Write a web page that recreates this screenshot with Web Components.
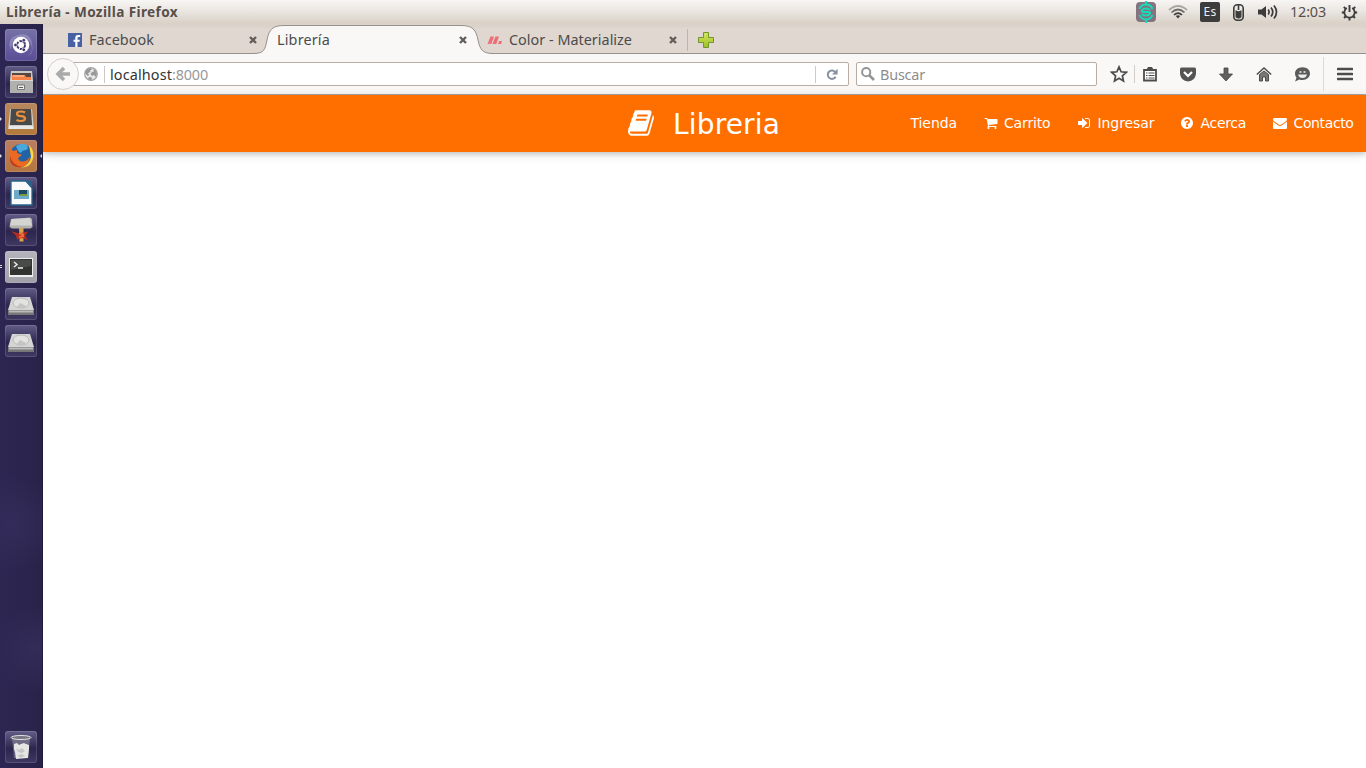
<!DOCTYPE html>
<html lang="es">
<head>
<meta charset="utf-8">
<title>Librería</title>
<style>
html,body{margin:0;height:100%;overflow:hidden;background:#fff}
body{font-family:"Noto Sans","Open Sans",sans-serif;font-size:14.4px;color:#4c4c4c}
</style>
</head>
<body>
<desktop-shell>
  <top-panel slot="panel"></top-panel>
  <app-launcher slot="launcher"></app-launcher>
  <browser-tabs></browser-tabs>
  <browser-toolbar></browser-toolbar>
  <site-navbar></site-navbar>
</desktop-shell>
<script>
const define = (name, html, ready) => {
  const t = document.createElement('template');
  t.innerHTML = html;
  customElements.define(name, class extends HTMLElement {
    constructor() {
      super();
      this.attachShadow({mode: 'open'}).append(t.content.cloneNode(true));
    }
    connectedCallback() { if (ready) ready(this, this.shadowRoot); }
  });
};

// Label whose tracking is adjusted so the text spans a given width.
define('fit-text', `<style>:host{display:inline-block;white-space:pre;flex:none;line-height:1.3}</style><slot></slot>`, el => {
  const w = +el.getAttribute('w');
  const n = el.textContent.length;
  const natural = el.getBoundingClientRect().width;
  if (w && natural) el.style.letterSpacing = ((w - natural) / n).toFixed(3) + 'px';
});

// Web font style glyph icons, drawn on a 1792 unit grid.
const glyphs = {
  book: 'M1639 478q40 57 18 129l-275 906q-19 64-76.5 107.5t-122.5 43.5h-923q-77 0-148.5-53.5t-99.5-131.5q-24-67-2-127 0-4 3-27t4-37q1-8-3-21.5t-3-19.5q2-11 8-21t16.5-23.5 16.5-23.5q23-38 45-91.5t30-91.5q3-10 .5-30t-.5-28q3-11 17-28t17-23q21-36 42-92t25-90q1-9-2.5-32t.5-28q4-13 22-30.5t22-22.5q19-26 42.5-84.5t27.5-96.5q1-8-3-25.5t-2-26.5q2-8 9-18t18-23 17-21q8-12 16.5-30.5t15-35 16-36 19.5-32 26.5-23.5 36-11.5 47.5 5.5l-1 3q38-9 51-9h761q74 0 114 56t18 130l-274 906q-36 119-71.5 153.5t-128.5 34.5h-869q-27 0-38 15-11 16-1 43 24 70 144 70h923q29 0 56-15.5t35-41.5l300-987q7-22 5-57 38 15 59 43zm-1064 2q-4 13 2 22.5t20 9.5h608q13 0 25.5-9.5t16.5-22.5l21-64q4-13-2-22.5t-20-9.5h-608q-13 0-25.5 9.5t-16.5 22.5zm-83 256q-4 13 2 22.5t20 9.5h608q13 0 25.5-9.5t16.5-22.5l21-64q4-13-2-22.5t-20-9.5h-608q-13 0-25.5 9.5t-16.5 22.5z',
  cart: 'M704 1536q0 52-38 90t-90 38-90-38-38-90 38-90 90-38 90 38 38 90zm896 0q0 52-38 90t-90 38-90-38-38-90 38-90 90-38 90 38 38 90zm128-1088v512q0 24-16.5 42.5t-40.5 21.5l-1044 122q13 60 13 70 0 16-24 64h920q26 0 45 19t19 45-19 45-45 19h-1024q-26 0-45-19t-19-45q0-11 8-31.5t16-36 21.5-40 15.5-29.5l-177-823h-204q-26 0-45-19t-19-45 19-45 45-19h256q16 0 28.5 6.5t19.5 15.5 13 24.5 8 26 5.5 29.5 4.5 26h1201q26 0 45 19t19 45z',
  signin: 'M1312 896q0 26-19 45l-544 544q-19 19-45 19t-45-19-19-45v-288h-448q-26 0-45-19t-19-45v-384q0-26 19-45t45-19h448v-288q0-26 19-45t45-19 45 19l544 544q19 19 19 45zm352-352v704q0 119-84.5 203.5t-203.5 84.5h-320q-13 0-22.5-9.5t-9.5-22.5q0-4-1-20t-.5-26.5 3-23.5 10-19.5 20.5-6.5h320q66 0 113-47t47-113v-704q0-66-47-113t-113-47h-312l-11.5-1-11.5-3-8-5.5-7-9-2-13.5q0-4-1-20t-.5-26.5 3-23.5 10-19.5 20.5-6.5h320q119 0 203.5 84.5t84.5 203.5z',
  question: 'M1024 1376v-192q0-14-9-23t-23-9h-192q-14 0-23 9t-9 23v192q0 14 9 23t23 9h192q14 0 23-9t9-23zm256-672q0-88-55.5-163t-138.5-116-170-41q-243 0-371 213-15 24 8 42l132 100q7 6 19 6 16 0 25-12 53-68 86-92 34-24 86-24 48 0 85.5 26t37.5 59q0 38-20 61t-68 45q-63 28-115.5 86.5t-52.5 125.5v36q0 14 9 23t23 9h192q14 0 23-9t9-23q0-19 21.5-49.5t54.5-49.5q32-18 49-28.5t46-35 44.5-48 28-60.5 12.5-81zm384 192q0 209-103 385.5t-279.5 279.5-385.5 103-385.5-103-279.5-279.5-103-385.5 103-385.5 279.5-279.5 385.5-103 385.5 103 279.5 279.5 103 385.5z',
  envelope: 'M1792 710v794q0 66-47 113t-113 47h-1472q-66 0-113-47t-47-113v-794q44 49 101 87 362 246 497 345 57 42 92.5 65.5t94.5 48 110 24.5h2q51 0 110-24.5t94.5-48 92.5-65.5q170-123 498-345 57-39 100-87zm0-294q0 79-49 151t-122 123q-376 261-468 325-10 7-42.5 31t-54 38.5-52 32.5-57.5 27-50 9h-2q-23 0-50-9t-57.5-27-52-32.5-54-38.5-42.5-31q-91-64-262-182.5t-205-142.5q-62-42-117-115.5t-55-136.5q0-78 41.5-130t118.5-52h1472q65 0 112.5 47t47.5 113z'
};
define('glyph-icon', `<style>:host{display:inline-block;width:14px;height:14px;flex:none}svg{display:block;width:100%;height:100%}</style><svg viewBox="0 0 1792 1792" fill="currentColor" preserveAspectRatio="none"><path/></svg>`,
  (el, r) => r.querySelector('path').setAttribute('d', glyphs[el.getAttribute('name')]));

define('nav-link', `<style>:host{display:flex;align-items:center;gap:7px;height:100%;flex:none}</style><slot></slot>`);

define('site-navbar', `<style>
:host{display:flex;flex:none;height:57px;box-sizing:border-box;background:#ff6f00;color:#fff;box-shadow:0 2px 5px rgba(0,0,0,.16),0 2px 10px rgba(0,0,0,.12);justify-content:space-between;padding:0 13px 0 585px}
fit-text{font-family:"DejaVu Sans",sans-serif}
.brand{display:flex;align-items:center;gap:17px;font-size:28px;line-height:1}
.brand glyph-icon{width:28px;height:30px;margin-top:-1px}
.brand fit-text{margin-top:3px}
nav{display:flex;height:100%;font-size:14px}
nav fit-text{margin-top:-1px}
glyph-icon{margin-top:-1px}
</style>
<div class="brand"><glyph-icon name="book"></glyph-icon><fit-text w="107">Libreria</fit-text></div>
<nav>
<nav-link style="width:73px"><fit-text w="46.500">Tienda</fit-text></nav-link>
<nav-link style="width:93px;gap:6.500px"><glyph-icon name="cart"></glyph-icon><fit-text w="46.500">Carrito</fit-text></nav-link>
<nav-link style="width:103px"><glyph-icon name="signin"></glyph-icon><fit-text w="57">Ingresar</fit-text></nav-link>
<nav-link style="width:93px"><glyph-icon name="question"></glyph-icon><fit-text w="45.500">Acerca</fit-text></nav-link>
<nav-link style="width:80.500px"><glyph-icon name="envelope"></glyph-icon><fit-text w="60">Contacto</fit-text></nav-link>
</nav>`);

define('close-mark', `<style>:host{display:block;width:8px;height:8px;flex:none}svg{display:block}</style>
<svg width="8" height="8"><path d="M1 1l6 6M7 1L1 7" stroke="#625e5a" stroke-width="2.4"/></svg>`);

define('browser-tab', `<style>
:host{display:flex;position:relative;align-items:center;box-sizing:border-box;width:210px;height:30px;flex:none;padding:1px 0 0 1px}
.icon{display:flex;width:22px;flex:none}:host([active]) .icon{display:none}
.shape{display:none;position:absolute;left:-22px;top:0}
:host([active]) .shape{display:block}
.row{position:relative;display:flex;align-items:center;width:191px}
:host([active]) .row{padding-left:1px;width:190px}
::slotted(fit-text){margin-top:1px}
close-mark{margin-left:auto;margin-right:1px}
:host([active]) close-mark{margin-right:0}
</style>
<svg class="shape" width="240" height="30"><path d="M0 30V29.5C12 29.5 12 25 14 16C16 5 20 1.5 31 1.5H208C220 1.5 223 6 225 16C227 25 229 29.5 240 29.5V30Z" fill="#f9f8f6"/><path d="M0 29.5C12 29.5 12 25 14 16C16 5 20 1.5 31 1.5H208C220 1.5 223 6 225 16C227 25 229 29.5 240 29.5" fill="none" stroke="#96918d"/></svg>
<div class="row"><span class="icon"><slot name="icon"></slot></span><slot></slot><close-mark></close-mark></div>`);

define('browser-tabs', `<style>
:host{display:flex;flex:none;height:30px;box-sizing:border-box;padding-left:23px;background:linear-gradient(#dbd2c9 0 3px,#dfd7d0 4px);box-shadow:inset 0 -1px #96918d;position:relative}
svg{display:block}
.plus{border-left:1px solid #bdb6b0;margin:5px 0 3px -9px;padding:2px 0 0 9px}
</style>
<browser-tab><svg slot="icon" style="margin-left:1px" width="14" height="14"><path d="M0 0h14v14H0z" fill="#4861a5"/><path d="M9.5 14V8.8h2.2V6.7H9.5V5.2q0-1.1 1.2-1.1h1.5V2H10Q7.3 2 7.3 4.8v1.9H5.500v2.1h1.8V14z" fill="#fff"/></svg><fit-text w="65">Facebook</fit-text></browser-tab>
<browser-tab active style="left:-1px"><fit-text w="53">Librería</fit-text></browser-tab>
<browser-tab><svg slot="icon" width="16" height="14" fill="#ee6e78"><path d="M.5 11L3.500 3.500H7L4.300 11H2.300L3.500 7.500 2 11zM5.500 11L8.500 3.500H12L9.300 11H6.800L8.300 7.500 6.800 11zM11 11l1.200-3H15l-1 3z"/></svg><fit-text w="123">Color - Materialize</fit-text></browser-tab>
<div class="plus"><svg width="18" height="17"><defs><linearGradient id="g" x2="0" y2="1"><stop stop-color="#d4e65c"/><stop offset="1" stop-color="#9dbf24"/></linearGradient></defs><path d="M6.500 1.500h5v5h5v5h-5v5h-5v-5h-5v-5h5z" fill="url(#g)" stroke="#71962b"/></svg></div>`);

define('browser-toolbar', `<style>
:host{display:flex;flex:none;height:41px;box-sizing:border-box;background:#f9f8f6;border-bottom:1px solid #aca7a1;padding:0 0 0 4px;align-items:center}
svg{display:block;flex:none}
fit-text{margin-top:2px}
.back{position:relative;display:grid;place-items:center;box-sizing:border-box;width:32px;height:32px;border:1px solid #d4cfc9;border-radius:50%;background:#f9f8f6;z-index:1;flex:none}
.url,.search{display:flex;align-items:center;box-sizing:border-box;height:24px;background:#fff;border:1px solid #b9ada3;border-radius:2px}
.url{width:777px;margin-left:-7px;padding-left:11px}
.sep{width:1px;height:17px;background:#ccc7c2;margin:0 5px 0 6px;flex:none}
.port{color:#999}
.reload{margin-left:auto;display:flex;align-items:center;border-left:1px solid #ccc;height:17px;padding:0 10px}
.search{width:241px;margin-left:7px;padding-left:4px;color:#8d8d8d}
.search fit-text{margin-left:5px}
.tools{display:flex;align-items:center;margin-left:13px}
.vr{width:1px;height:18px;background:#d2cdc8;margin:0 7px 0 6px}
.menu{border-left:1px solid #ddd9d5;height:34px;padding-left:13px;display:flex;align-items:center;margin-left:12px}
</style>
<div class="back"><svg width="18" height="18"><path d="M3.500 9H16M10 3L4 9l6 6" stroke="#aaa" stroke-width="3.600" fill="none"/></svg></div>
<div class="url">
 <svg width="14" height="14"><circle cx="7" cy="7" r="6.300" fill="#e8e8e8" stroke="#a2a2a2" stroke-width="1.200"/><path d="M1 5Q3 1 7 1l1 1.500-2 1 .5 1.500-2.500 1 1 2-1 1-2.500-2zM9 2q3.500 1 4 5l-1.500 3-1.500-2-2 1-1.500-2L8 5l2-.5zM5 10l3 .500L7.500 13Q5 13 4 12z" fill="#999"/></svg>
 <span class="sep"></span><fit-text w="62" style="color:#333">localhost</fit-text><fit-text class="port" w="36">:8000</fit-text>
 <span class="reload"><svg width="12" height="13"><path d="M9.600 8.800A4.200 4.200 0 1 1 9.200 4" fill="none" stroke="#8792a0" stroke-width="2"/><path d="M11.600.8v5.700H6z" fill="#8792a0"/></svg></span>
</div>
<div class="search"><svg width="14" height="14"><circle cx="5.200" cy="5.200" r="4.100" fill="none" stroke="#949494" stroke-width="2"/><path d="M8 8l5 5" stroke="#949494" stroke-width="2.500"/></svg><fit-text w="45">Buscar</fit-text></div>
<div class="tools">
 <svg width="18" height="18"><path d="M9 1.900l2.100 4.900 5.200.5-3.900 3.500 1.100 5.200L9 13.300 4.500 16l1.100-5.200-3.900-3.500 5.200-.5z" fill="none" stroke="#4c4c4c" stroke-width="1.700"/></svg>
 <span class="vr"></span>
 <svg width="16" height="16"><path d="M2 4h12v10.500H2z" fill="#fff" stroke="#4c4c4c" stroke-width="1.800"/><path d="M4 4.500L6 1h4l2 3.500z" fill="#4c4c4c"/><path d="M4 7h1.500M6.500 7h6M4 9.500h1.500M6.500 9.500h6M4 12h1.500M6.500 12h6" stroke="#4c4c4c" stroke-width="1.100"/></svg>
 <svg style="margin-left:22px" width="16" height="15"><path d="M0 2Q0 .5 1.500.5h13Q16 .5 16 2v5q-1 7-8 7.500Q1 14 0 7z" fill="#555"/><path d="M4 5l4 4 4-4" fill="none" stroke="#fff" stroke-width="2.200"/></svg>
 <svg style="margin-left:23px" width="14" height="15"><path d="M5 1h4v6h4.500L7 14 .5 7H5z" fill="#606060" stroke="#444" stroke-width=".8"/></svg>
 <svg style="margin-left:23px" width="16" height="16"><path d="M3.500 8.500L8 5l4.500 3.500V15h-3v-4h-3v4h-3z" fill="#777" stroke="#4c4c4c"/><path d="M.8 8.500L8 2l7.200 6.500" fill="none" stroke="#4c4c4c" stroke-width="1.500"/></svg>
 <svg style="margin-left:22px" width="17" height="16"><path d="M8.500 1.200c4.500 0 7.500 2.800 7.500 6.300s-3 6.500-7.500 6.500q-2 0-3-.5L1 15.500l1.500-3.800Q1 10 1 7.500C1 4 4 1.200 8.500 1.200z" fill="#5b5b5b"/><path d="M4 8.500h9q-1 3.500-4.500 3.500T4 8.500z" fill="#eee"/><path d="M5.500 6h2M9.500 6h2" stroke="#eee" stroke-width="1.700"/></svg>
 <div class="menu"><svg width="16" height="14"><path d="M1 2h14M1 7h14M1 12h14" stroke="#4c4c4c" stroke-width="2.700" stroke-linecap="round"/></svg></div>
</div>`);

define('top-panel', `<style>
:host{display:flex;height:24px;box-sizing:border-box;align-items:center;padding:0 8px 0 6px;background:linear-gradient(#f7f6f4,#e9e4df 50%,#d9d0c6);color:#57504a}
.title{font-weight:700;font-size:13.6px}
.tray{display:flex;align-items:center;margin-left:auto}
svg{display:block}
.lang{display:grid;place-items:center;width:20px;height:20px;margin-left:12px;border-radius:2px;background:#3c3c3c;color:#eee;font-size:12px;line-height:1}
</style>
<fit-text class="title" w="172">Librería - Mozilla Firefox</fit-text>
<div class="tray">
 <svg width="20" height="22"><rect y="1" width="20" height="20" rx="4" fill="#84747f"/><g fill="none" stroke="#15dbbb" stroke-width="2"><path d="M10 0v4M10 18v4M3.500 8A7 7 0 0 1 16.500 8M3.500 14A7 7 0 0 0 16.500 14"/><path d="M14 9Q13 7.500 10 7.500T6 9.500 10 11t4 1.500-4 2-4-1.500"/></g></svg>
 <svg style="margin-left:12px" width="20" height="14"><g fill="none" stroke-width="1.700"><path d="M1 5Q10-3 19 5" stroke="#aaa6a1"/><path d="M3.500 7.500Q10 1.500 16.500 7.500" stroke="#6d6a67"/><path d="M6 10Q10 6 14 10" stroke="#3c3c3c"/></g><path d="M7.800 11q2.200-1.500 4.400 0L10 13.500z" fill="#3c3c3c"/></svg>
 <span class="lang"><fit-text w="13">Es</fit-text></span>
 <svg style="margin-left:13px" width="11" height="17"><rect x=".8" y=".8" width="9.400" height="15.400" rx="3.500" fill="none" stroke="#3c3c3c" stroke-width="1.600"/><path d="M2.500 6Q5.500 8.500 8.500 6v7q-3 3-6 0z" fill="#3c3c3c"/><path d="M5.500 1v5" stroke="#3c3c3c" stroke-width="1.600"/></svg>
 <svg style="margin-left:14px" width="21" height="16"><path d="M0 5.500h3.500L8 2v12L3.500 10.500H0z" fill="#3c3c3c"/><g fill="none" stroke="#3c3c3c" stroke-width="1.700"><path d="M10.200 5.500q1.700 2.500 0 5M13 3.500q3.500 4.500 0 9M16 1.500q5 6.500 0 13"/></g></svg>
 <fit-text style="margin-left:11px;margin-right:1px" w="36">12:03</fit-text>
 <svg style="margin-left:14px" width="17" height="17"><path d="M5.800 4A5.200 5.200 0 1 0 11.200 4" fill="none" stroke="#3c3c3c" stroke-width="1.800"/><path d="M8.500 1v7M.8 8.500h3M13.200 8.500h3M3 14l2-2M14 14l-2-2M8.500 13.500v3M2.800 2.800l2 2M14.200 2.800l-2 2" stroke="#3c3c3c" stroke-width="1.900"/></svg>
</div>`);

define('launcher-item', `<style>
:host{display:block;position:relative;width:32px;height:32px;box-sizing:border-box;border-radius:3px;background:var(--tile,linear-gradient(#625d88,#2c264e 55%,#403962));box-shadow:inset 0 0 0 1px rgba(255,255,255,.13);flex:none}
.l,.r,.two{display:none;position:absolute;top:14px;border:2.500px solid transparent}
.l{left:-5px;border-left-color:#ddd;border-right:0}
.r{right:-5px;border-right-color:#ddd;border-left:0}
.two{left:-5px;top:14px;width:2px;height:1px;border:solid #ddd;border-width:1px 0}
:host([running]) .l,:host([focused]) .r,:host([windows]) .two{display:block}
</style><i class="l"></i><i class="two"></i><i class="r"></i><slot></slot>`);

const drive = `<svg viewBox="0 0 32 32"><path d="M7 9h18l4 13v4H3v-4z" fill="#d5d5d3"/><path d="M3 22h26v5H3z" fill="#777"/><path d="M4 22.500h24v2H4z" fill="#bbb"/><ellipse cx="16" cy="15" rx="8" ry="5" fill="#e2e2e0" stroke="#bbb"/><path d="M12 19l3-4 6 3-3 2z" fill="#c4c4c2"/></svg>`;
define('app-launcher', `<style>
:host{display:flex;flex-direction:column;gap:5px;box-sizing:border-box;height:100%;padding:5px 0 5px 5px;background:radial-gradient(circle at 10px 500px,#332c5a 0,transparent 50px),radial-gradient(circle at 35px 625px,#332c5a 0,transparent 45px),linear-gradient(90deg,#2d2653,#292248);box-shadow:inset -1px 0 #211b3d}
svg{display:block;width:32px;height:32px}
.trash{margin-top:auto}
</style>
<launcher-item style="--tile:linear-gradient(#7672a6,#5a4d96)"><svg viewBox="0 0 32 32"><path d="M6 21Q1 9 13 6t14 8-4 13q6-5 3-12T15 8 6 21z" fill="#a39dca" opacity=".6"/><circle cx="16" cy="16" r="8.300" fill="#fff"/><circle cx="16" cy="16" r="4" fill="none" stroke="#40376e" stroke-width="2" stroke-dasharray="7.300 1.080"/><g fill="#40376e" stroke="#fff" stroke-width=".7"><circle cx="10.500" cy="16" r="1.800"/><circle cx="18.800" cy="11.200" r="1.800"/><circle cx="18.800" cy="20.800" r="1.800"/></g></svg></launcher-item>
<launcher-item><svg viewBox="0 0 32 32"><path d="M6 5h21l1 9H5z" fill="#c9c9c7"/><path d="M7 7h19v7H7z" fill="#574743"/><path d="M7 9h13l1 2h5v5H7z" fill="#f58146"/><path d="M8 10h11" stroke="#ffd3ae"/><path d="M5 14h23v13H5z" fill="#b0b0ae"/><path d="M5 14.500h23" stroke="#ddd"/><path d="M12.500 19h7v4.500h-7z" fill="#eee" stroke="#777"/><path d="M14 21.500h4" stroke="#555"/></svg></launcher-item>
<launcher-item running style="--tile:linear-gradient(#b7875e,#b27a3a)"><svg viewBox="0 0 32 32"><path d="M5 6h22l2 20H3z" fill="#ccc"/><path d="M6 6h20l1 16H5z" fill="#494949"/><path d="M4 23h24v3H4z" fill="#e8e8e6"/><path d="M20 9.500q-1.500-1-4-1-4 0-4 2.200t4 2.400 4 2.500-4 2.400q-3 0-4.500-1.200" fill="none" stroke="#e8903c" stroke-width="2.200"/></svg></launcher-item>
<launcher-item running focused style="--tile:linear-gradient(#b87e62,#b57542)"><svg viewBox="0 0 32 32"><circle cx="16.500" cy="15.500" r="11.500" fill="#2462a8"/><path d="M11 6q6-4 11-1 2 4-1 5-4 0-5 3-3-1-5-7z" fill="#49a9dc"/><path d="M24 5q5 5 4.500 11Q27 27.500 16 27.500q9-3 10-11z" fill="#ffd13b"/><path d="M5 8l3 3 4-1v3l5 2-4 3q1 4 5 3.500 5-.5 7-5.500-.5 7-5.500 10Q13 29 8 24.500 3.500 20 4.500 13z" fill="#ea6a22"/><path d="M5 16q2 9 12 11-9 1.500-12-6z" fill="#c53b1d"/></svg></launcher-item>
<launcher-item><svg viewBox="0 0 32 32"><path d="M6 4h15l6 7v17H6z" fill="#fafafa" stroke="#26668d" stroke-width="1.300"/><path d="M20 4h7v7z" fill="#29638c"/><path d="M9 13h15v9H9z" fill="#70aacb"/><path d="M14 13h8v5h-8z" fill="#214962"/><path d="M15 17h7v2h-7z" fill="#719e43"/></svg></launcher-item>
<launcher-item><svg viewBox="0 0 32 32"><path d="M6 5l19-1.500 2 1.500.5 8-2 1.500H7L4.500 13z" fill="#b1b1ae"/><path d="M6.500 5L25 4l2 7.500H5z" fill="#d4d4d0"/><path d="M14 14h4.500v13.500h-4z" fill="#d6a24b"/><path d="M6 17l8 2.500 9-2-3 4.500 3 4-6-2-5 1.500-1-4z" fill="#b72c1d"/><path d="M14 19l5 2M14 23l5-1" stroke="#eb6d3a" stroke-width="2"/></svg></launcher-item>
<launcher-item windows style="--tile:linear-gradient(#b5b3bb,#a19fa7)"><svg viewBox="0 0 32 32"><path d="M4 7h24v19H4z" fill="#eee"/><path d="M5 8h22v16H5z" fill="#30332f"/><path d="M6 9h20v6L6 19z" fill="#484b47"/><path d="M9 11l3 2.500L9 16M13 17h5" fill="none" stroke="#eee" stroke-width="1.400"/></svg></launcher-item>
<launcher-item>${drive}</launcher-item>
<launcher-item>${drive}</launcher-item>
<launcher-item class="trash"><svg viewBox="0 0 32 32"><path d="M7 7h18l-2 20H9z" fill="#a9a9b1" opacity=".45"/><path d="M9 13l3-1 2 2 2-1 3-1 2 1 3 1v4l-1 9-12 1-1-7-1-3z" fill="#e5e5e3"/><path d="M11 17l3 2 3-2 3 3-3 2-4-1zM13 24l4-1 3 2-5 2z" fill="#c6c6c4"/><ellipse cx="16" cy="6.500" rx="10" ry="2" fill="#777583" stroke="#e2e2e0"/></svg></launcher-item>`);

define('desktop-shell', `<style>
:host{display:grid;width:1366px;height:768px;grid-template:24px 744px/43px 1323px;overflow:hidden}
.panel{grid-column:1/3}
main{display:flex;flex-direction:column;min-width:0;background:#fff;overflow:hidden}
</style><div class="panel"><slot name="panel"></slot></div><slot name="launcher"></slot><main><slot></slot></main>`);
</script>
</body>
</html>
